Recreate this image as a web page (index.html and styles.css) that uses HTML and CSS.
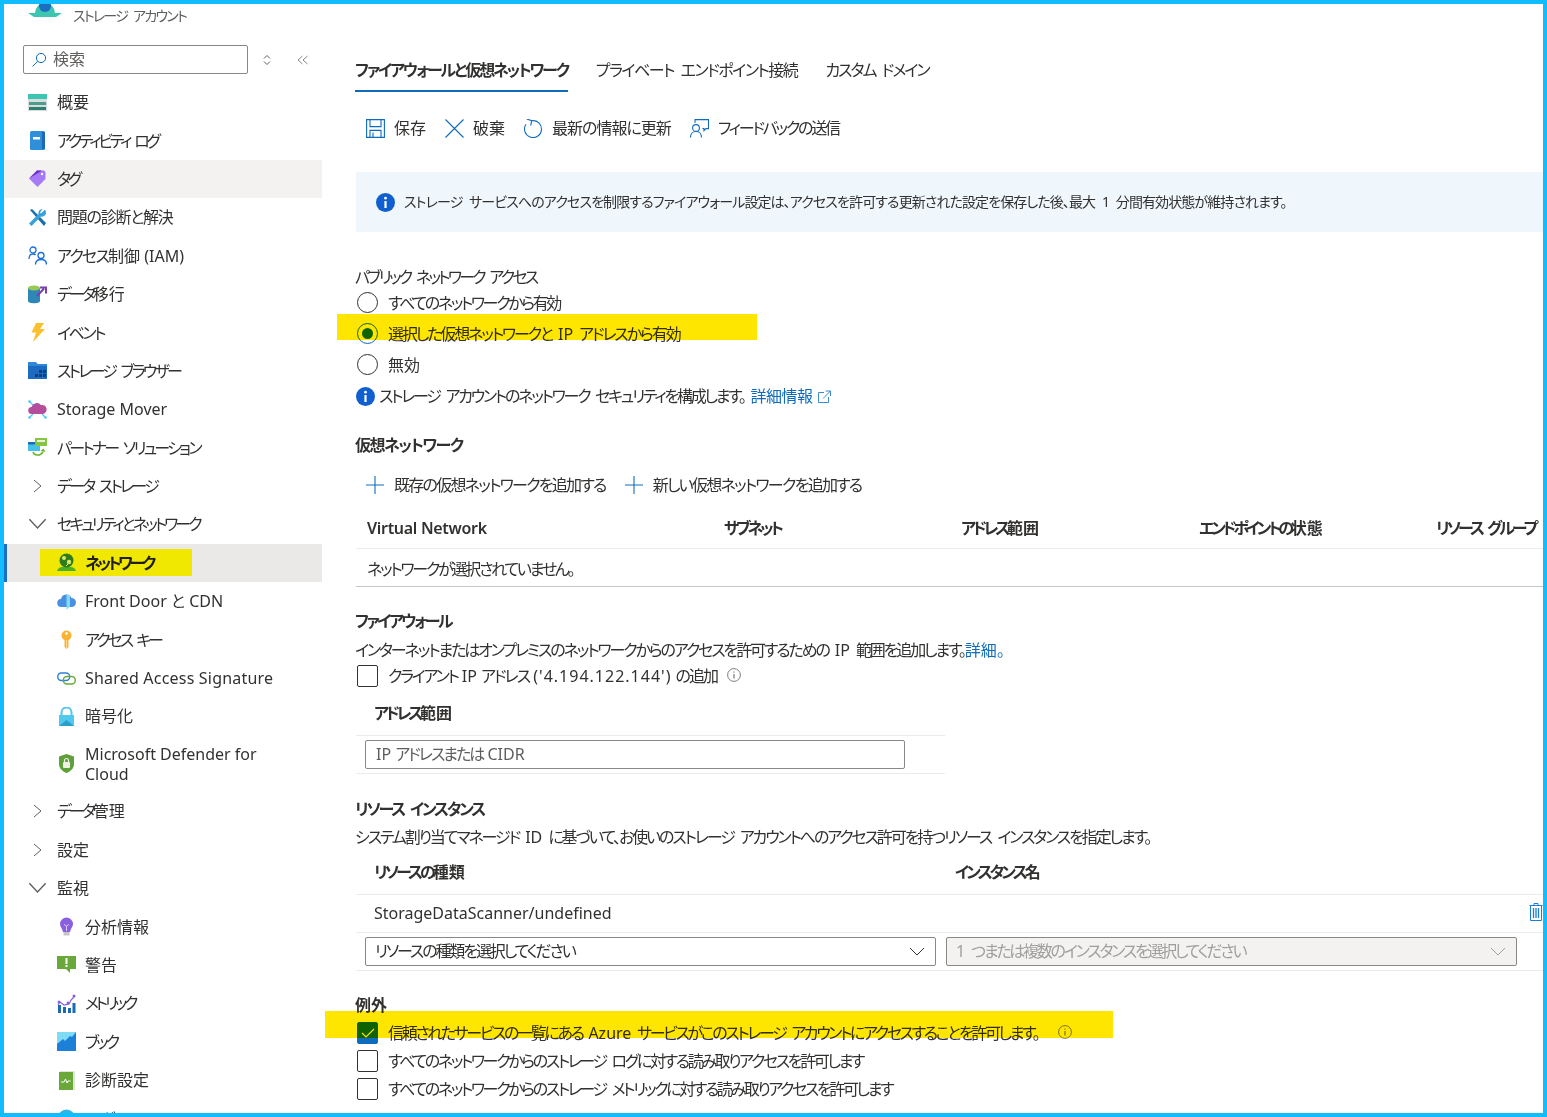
FILE: index.html
```html
<!DOCTYPE html>
<html lang="ja">
<head>
    <meta charset="UTF-8">
    <title>ファイアウォールと仮想ネットワーク</title>
    <link rel="stylesheet" href="styles.css">
</head>
<body>
<div class="frame">
    <!-- left menu -->
    <aside class="sidebar">
        <div class="brand">
            <svg class="brand-icon" viewBox="0 0 34 13"><path d="M0 9h34l-6 4H6z" fill="#3cc5b0"/><path d="M7 9a10 10 0 0 1 20 0z" fill="#3cc5b0"/><circle cx="17" cy="2" r="6" fill="#1b6fc2"/></svg>
            <span class="tight-18 sp">ストレージ アカウント</span>
        </div>
        <div class="search-row">
            <div class="search">
                <svg class="search-icon" viewBox="0 0 16 16"><circle cx="10" cy="6" r="4.6" fill="none" stroke="#0f6cbd"/><path d="M6.6 9.4 1.5 14.5" stroke="#0f6cbd" fill="none"/></svg>
                <span>検索</span>
            </div>
            <svg class="sort-icon" viewBox="0 0 10 12"><path d="M2 4.5 5 1.5l3 3M2 7.5l3 3 3-3" fill="none" stroke="#605e5c"/></svg>
            <svg class="collapse-icon" viewBox="0 0 12 10"><path d="M5.5 1 1 5l4.5 4M10.5 1 6 5l4.5 4" fill="none" stroke="#8a8886"/></svg>
        </div>
        <nav class="nav">
            <a class="nav-item">
                <svg class="ico" viewBox="0 0 19 19"><rect y="1" width="19" height="5" fill="#3cc5b0"/><rect y="6" width="19" height="12" fill="#d9dcdc"/><rect x="1" y="9" width="17" height="3" fill="#4a9c8c"/><rect x="1" y="14" width="17" height="3" fill="#2f7f70"/></svg>
                <span>概要</span>
            </a>
            <a class="nav-item">
                <svg class="ico" viewBox="0 0 19 19"><rect x="2" y="0" width="15" height="19" rx="1.5" fill="#2f8fdb"/><rect x="14" y="1" width="3" height="17" fill="#1c6bb0"/><rect x="5" y="6" width="7" height="2.5" fill="#fff"/></svg>
                <span class="tight-32 sp">アクティビティ ログ</span>
            </a>
            <a class="nav-item hovered">
                <svg class="ico" viewBox="0 0 19 19"><path d="M1 9.5 9 1.500h7l1.500 1.500v7l-8 8z" fill="#a67af4"/><path d="M1 9.500 9 1.500h5z" fill="#6b2fc9"/><circle cx="14" cy="5" r="1.200" fill="#fff"/></svg>
                <span class="tight-32">タグ</span>
            </a>
            <a class="nav-item">
                <svg class="ico" viewBox="0 0 19 19"><path d="M2 2 4 1l14 14-2 3z" fill="#1b6fa8"/><path d="M17 1.500 13 5.500l-1-1 2.500-3.500a4 4 0 0 0-4 5L1 15.500 3.500 18l9.500-9.500a4 4 0 0 0 5-4.500z" fill="#3aa0d8"/></svg>
                <span class="tight-12">問題の診断と解決</span>
            </a>
            <a class="nav-item">
                <svg class="ico" viewBox="0 0 19 19"><g fill="none" stroke="#1b6fd8" stroke-width="1.300"><circle cx="5" cy="4" r="3"/><path d="M1 13c0-3 1.500-5 4-5 1 0 2 .3 2.500 1"/><circle cx="13" cy="9.500" r="3"/><path d="M7.500 18.500c0-3 2.200-5 5.500-5s5.500 2 5.500 5"/></g></svg>
                <span><span class="tight-18">アクセス</span>制御 (IAM)</span>
            </a>
            <a class="nav-item">
                <svg class="ico" viewBox="0 0 19 19"><path d="M0 3v13c0 3 12 3 12 0V3z" fill="#2f87b8"/><ellipse cx="6" cy="3" rx="6" ry="2.500" fill="#9bc850"/><path d="M9 11 16 3.500M12 2.500h6v6" stroke="#7a3fa8" stroke-width="2" fill="none"/></svg>
                <span><span class="tight-30">データ</span>移行</span>
            </a>
            <a class="nav-item">
                <svg class="ico" viewBox="0 0 19 19"><path d="M8 0h8l-4 6h5L5 19l3-9.500H3.500z" fill="#fbc02d"/></svg>
                <span class="tight-25">イベント</span>
            </a>
            <a class="nav-item">
                <svg class="ico" viewBox="0 0 19 19"><path d="M0 1h8l1.500 2H19v15H0z" fill="#2f87d8"/><rect y="5" width="19" height="13" fill="#1c6bc0"/><path d="M11 9h3v3h-3zM15 9h3v3h-3zM7 13h3v3H7zM11 13h3v3h-3zM15 13h3v3h-3z" fill="#0d3f7f"/></svg>
                <span class="tight-28 sp">ストレージ ブラウザー</span>
            </a>
            <a class="nav-item">
                <svg class="ico" viewBox="0 0 19 19"><g stroke="#50c8f0" stroke-width="1.200"><path d="M1 1l4 4M18 18l-4-4M1 18l4-4"/></g><circle cx="1.500" cy="1.500" r="1.300" fill="#50c8f0"/><circle cx="1.500" cy="17.500" r="1.300" fill="#50c8f0"/><circle cx="17.500" cy="17.500" r="1.300" fill="#50c8f0"/><path d="M4 14a3.500 3.500 0 0 1-.5-7A5.500 5.500 0 0 1 13 5a4.500 4.500 0 0 1 2 9z" fill="#b44d9c"/></svg>
                <span class="plain">Storage Mover</span>
            </a>
            <a class="nav-item">
                <svg class="ico" viewBox="0 0 19 19"><rect x="0" y="4" width="12" height="9" fill="#45c0e8"/><rect x="0" y="4" width="12" height="2.500" fill="#1c6bb0"/><rect x="7" y="0" width="12" height="8" fill="#86c544"/><rect x="9" y="2" width="8" height="2" fill="#e5f2d5"/><path d="M5 14c1 3.500 7 4.500 10 0" fill="none" stroke="#6ab42d" stroke-width="1.500"/><path d="m12.500 13 3-2.500 2 3.500z" fill="#6ab42d"/></svg>
                <span class="tight-28 sp">パートナー ソリューション</span>
            </a>
            <a class="nav-item">
                <svg class="chev" viewBox="0 0 10 14"><path d="M1.500 1 8.500 7l-7 6" fill="none" stroke="#605e5c"/></svg>
                <span class="tight-28 sp">データ ストレージ</span>
            </a>
            <a class="nav-item">
                <svg class="chev" viewBox="0 0 14 10"><path d="M1 1.500 7 8l6-6.500" fill="none" stroke="#605e5c"/></svg>
                <span class="tight-30">セキュリティとネットワーク</span>
            </a>
            <a class="nav-item sub active">
                <span class="mark">
                    <svg class="ico" viewBox="0 0 19 19"><path d="M0 18c1-3 3-4 5-4h9c2 0 4 1 5 4z" fill="#4caf27"/><circle cx="9.500" cy="7.500" r="7" fill="#2e7d1a"/><circle cx="7" cy="5" r="2" fill="#d9e86a"/><circle cx="12" cy="9" r="2.200" fill="#d9e86a"/><path d="M9 13l2-2" stroke="#d9e86a"/></svg>
                    <span class="tight-32">ネットワーク</span>
                </span>
            </a>
            <a class="nav-item sub">
                <svg class="ico" viewBox="0 0 19 19"><path d="M4.500 15a4 4 0 0 1-.5-8A5.500 5.500 0 0 1 14.500 6a4.500 4.500 0 0 1 0 9z" fill="#4a90e2"/><path d="M9.500 3h3.500v11l-3.500 4z" fill="#7fdcf5"/></svg>
                <span>Front Door と CDN</span>
            </a>
            <a class="nav-item sub">
                <svg class="ico" viewBox="0 0 19 19"><circle cx="9.500" cy="5.500" r="5" fill="#f9b233"/><circle cx="9.500" cy="3.500" r="1.300" fill="#fff"/><path d="M7.500 9h4v8l-2 2-2-2z" fill="#f9b233"/><path d="M9.500 10v8" stroke="#fcd886"/></svg>
                <span class="tight-30 sp">アクセス キー</span>
            </a>
            <a class="nav-item sub">
                <svg class="ico" viewBox="0 0 19 19"><rect x="0.700" y="4" width="12" height="7.500" rx="3.700" fill="none" stroke="#2f7fd8" stroke-width="1.400"/><rect x="6.300" y="7.500" width="12" height="7.500" rx="3.700" fill="none" stroke="#6aa83a" stroke-width="1.400"/></svg>
                <span class="plain wide-02">Shared Access Signature</span>
            </a>
            <a class="nav-item sub">
                <svg class="ico" viewBox="0 0 19 19"><path d="M4.500 9V5.500a5 5 0 0 1 10 0V9" fill="none" stroke="#50c8f0" stroke-width="2"/><rect x="2" y="8" width="15" height="11" fill="#50c8f0"/><path d="M2 19l7.500-6 7.500 6z" fill="#2a9fc9"/></svg>
                <span>暗号化</span>
            </a>
            <a class="nav-item sub tall">
                <svg class="ico" viewBox="0 0 19 19"><path d="M9.500 0 17 2.500V10c0 5-4 7.500-7.500 9C6 17.500 2 15 2 10V2.500z" fill="#5fa03a"/><rect x="6" y="8" width="7" height="6" rx="1" fill="#f0f0e4"/><path d="M7.500 8V6.500a2 2 0 0 1 4 0V8" fill="none" stroke="#f0f0e4" stroke-width="1.200"/></svg>
                <span class="plain">Microsoft Defender for Cloud</span>
            </a>
            <a class="nav-item">
                <svg class="chev" viewBox="0 0 10 14"><path d="M1.500 1 8.500 7l-7 6" fill="none" stroke="#605e5c"/></svg>
                <span><span class="tight-30">データ</span>管理</span>
            </a>
            <a class="nav-item">
                <svg class="chev" viewBox="0 0 10 14"><path d="M1.500 1 8.500 7l-7 6" fill="none" stroke="#605e5c"/></svg>
                <span>設定</span>
            </a>
            <a class="nav-item">
                <svg class="chev" viewBox="0 0 14 10"><path d="M1 1.500 7 8l6-6.500" fill="none" stroke="#605e5c"/></svg>
                <span>監視</span>
            </a>
            <a class="nav-item sub">
                <svg class="ico" viewBox="0 0 19 19"><path d="M3 7a6.500 6.500 0 0 1 13 0c0 3-2.500 4.500-3 8H6c-.5-3.500-3-5-3-8z" fill="#8a5fe0"/><path d="M7 7.500 9.500 9 12 7.500M9.500 9v5" stroke="#d9c8f8" fill="none"/><rect x="6.500" y="15" width="6" height="3.500" fill="#c8c6c4"/></svg>
                <span>分析情報</span>
            </a>
            <a class="nav-item sub">
                <svg class="ico" viewBox="0 0 19 19"><path d="M0 1h19v13h-6v4l-4-4H0z" fill="#6aa83a"/><rect x="8.500" y="3" width="2" height="6" fill="#fff"/><rect x="8.500" y="10" width="2" height="2" fill="#fff"/></svg>
                <span>警告</span>
            </a>
            <a class="nav-item sub">
                <svg class="ico" viewBox="0 0 19 19"><path d="M1 19v-8h3v8zM6 19v-6h3v6zM11 19v-5h3v5zM15.500 19V9h3v10z" fill="#1c6bb0"/><path d="M1 11l2-3 4 3 5-1 2-4 3-3" stroke="#8a5fe0" stroke-width="1.200" fill="none"/><circle cx="2" cy="8" r="1.500" fill="#8a5fe0"/><circle cx="11" cy="9" r="1.500" fill="#8a5fe0"/><circle cx="17" cy="2" r="1.500" fill="#8a5fe0"/></svg>
                <span class="tight-32">メトリック</span>
            </a>
            <a class="nav-item sub">
                <svg class="ico" viewBox="0 0 19 19"><rect width="19" height="19" fill="#7fdcf5"/><path d="M0 12 6 7l2 2 5-5 2 1 4-5v19H0z" fill="#1c7fd8"/></svg>
                <span class="tight-30">ブック</span>
            </a>
            <a class="nav-item sub">
                <svg class="ico" viewBox="0 0 19 19"><rect x="3" y="0" width="15" height="19" fill="#dfe6d5"/><rect x="2" y="1" width="14" height="18" fill="#6aa83a"/><path d="M4 11h3l1.500-3 1.500 4 1-2h2.500" stroke="#fff" fill="none"/></svg>
                <span>診断設定</span>
            </a>
            <a class="nav-item sub">
                <svg class="ico" viewBox="0 0 19 19"><circle cx="9.500" cy="9.500" r="9" fill="#2fb5e8"/></svg>
                <span>ログ</span>
            </a>
        </nav>
    </aside>

    <!-- network settings -->
    <main class="content">
        <div class="tabs">
            <a class="tab selected tight-21">ファイアウォールと仮想ネットワーク</a>
            <a class="tab tight-15 sp">プライベート エンドポイント接続</a>
            <a class="tab tight-20 sp">カスタム ドメイン</a>
        </div>

        <div class="toolbar">
            <a class="tool">
                <svg class="tool-icon" viewBox="0 0 19 19"><g fill="none" stroke="#0f6cbd" stroke-width="1.100"><path d="M.6.600h17.800v17.800H.6z"/><path d="M4 .6v7h11v-7M4 18.400v-7h11v7M7 13.500v5"/></g></svg>
                <span>保存</span>
            </a>
            <a class="tool">
                <svg class="tool-icon" viewBox="0 0 19 19"><path d="M.5.500l18 18M18.500.500l-18 18" stroke="#0f6cbd" stroke-width="1.100" fill="none"/></svg>
                <span>破棄</span>
            </a>
            <a class="tool">
                <svg class="tool-icon" viewBox="0 0 19 19"><path d="M7.700 1.700a8.500 8.500 0 1 1-5.700 3.600" fill="none" stroke="#0f6cbd" stroke-width="1.100"/><path d="M2.700 0 7.700 1.700 6.700 6.700" fill="none" stroke="#0f6cbd" stroke-width="1.100"/></svg>
                <span class="tight-10">最新の情報に更新</span>
            </a>
            <a class="tool">
                <svg class="tool-icon" viewBox="0 0 19 19"><g fill="none" stroke="#0f6cbd" stroke-width="1.100"><path d="M5 4V.6h13.500v9H16l-2 2v-2h-1.500"/><circle cx="6" cy="9" r="3.400"/><path d="M.5 18.500c0-3.500 2.300-6 5.500-6s5.500 2.500 5.500 6"/></g></svg>
                <span class="tight-22">フィードバックの送信</span>
            </a>
        </div>

        <div class="info-bar">
            <svg class="info-icon" viewBox="0 0 19 19"><circle cx="9.500" cy="9.500" r="9.500" fill="#0f5fd0"/><rect x="8.400" y="8" width="2.200" height="7" fill="#fff"/><circle cx="9.500" cy="5.200" r="1.400" fill="#fff"/></svg>
            <span class="tight-09 sp">ストレージ サービスへのアクセスを制限するファイアウォール設定は、アクセスを許可する更新された設定を保存した後、最大 1 分間有効状態が維持されます。</span>
        </div>

        <div class="field-label tight-28 sp">パブリック ネットワーク アクセス</div>
        <div class="option"><span class="radio"></span><span class="tight-24">すべてのネットワークから有効</span></div>
        <div class="option"><span class="radio checked"></span><span class="tight-21 sp">選択した仮想ネットワークと <span class="latin">IP</span> アドレスから有効</span></div>
        <div class="option"><span class="radio"></span><span>無効</span></div>
        <div class="info-line">
            <svg class="info-icon" viewBox="0 0 19 19"><circle cx="9.500" cy="9.500" r="9.500" fill="#0f5fd0"/><rect x="8.400" y="8" width="2.200" height="7" fill="#fff"/><circle cx="9.500" cy="5.200" r="1.400" fill="#fff"/></svg>
            <span class="tight-22 sp">ストレージ アカウントのネットワーク セキュリティを構成します。</span>
            <a class="link">詳細情報</a>
            <svg class="ext-icon" viewBox="0 0 13 13"><path d="M10.500 7v5.500H.5v-10H6M7.500 1h5v5M12.500 1 5 8.500" fill="none" stroke="#0f6cbd" stroke-width=".8"/></svg>
        </div>

        <h2 class="heading h-vnet tight-15">仮想ネットワーク</h2>
        <div class="add-row">
            <a class="tool">
                <svg class="plus-icon" viewBox="0 0 18 18"><path d="M9 0v18M0 9h18" stroke="#0f6cbd" stroke-width="1.100"/></svg>
                <span class="tight-18">既存の仮想ネットワークを追加する</span>
            </a>
            <a class="tool">
                <svg class="plus-icon" viewBox="0 0 18 18"><path d="M9 0v18M0 9h18" stroke="#0f6cbd" stroke-width="1.100"/></svg>
                <span class="tight-18">新しい仮想ネットワークを追加する</span>
            </a>
        </div>
        <div class="vnet-head">
            <span class="tight-03 plain-head">Virtual Network</span>
            <span class="tight-32">サブネット</span>
            <span><span class="tight-32">アドレス</span>範囲</span>
            <span><span class="tight-32">エンドポイントの</span>状態</span>
            <span class="tight-30 sp">リソース グループ</span>
        </div>
        <div class="vnet-empty tight-22">ネットワークが選択されていません。</div>

        <h2 class="heading h-fw tight-25">ファイアウォール</h2>
        <p class="desc tight-21 sp">インターネットまたはオンプレミスのネットワークからのアクセスを許可するための <span class="latin">IP</span> 範囲を追加します。<a class="link latin">詳細。</a></p>
        <div class="client-row">
            <span class="check"></span>
            <span class="client-text"><span class="tight-22">クライアント</span> IP <span class="tight-20">アドレス</span> <span class="wide-10">('4.194.122.144')</span> <span class="tight-20">の追加</span></span>
            <svg class="hint-icon" viewBox="0 0 14 14"><circle cx="7" cy="7" r="6.400" fill="none" stroke="#605e5c" stroke-width=".8"/><path d="M7 6v4.500M7 3.500v1.200" stroke="#605e5c"/></svg>
        </div>
        <div class="addr-table">
            <div class="grid-head"><span class="tight-32">アドレス</span>範囲</div>
            <div class="grid-cell"><div class="text-box">IP <span class="tight-20">アドレスまたは</span> CIDR</div></div>
        </div>

        <h2 class="heading h-res tight-22 sp">リソース インスタンス</h2>
        <p class="desc tight-21 sp">システム割り当てマネージド <span class="latin">ID</span> に基づいて、お使いのストレージ アカウントへのアクセス許可を持つリソース インスタンスを指定します。</p>
        <div class="res-table">
            <div class="grid-head res-cols">
                <span><span class="tight-30">リソースの</span>種類</span>
                <span><span class="tight-30">インスタンス</span>名</span>
            </div>
            <div class="res-row">
                <span>StorageDataScanner/undefined</span>
                <svg class="trash-icon" viewBox="0 0 14 18"><g fill="none" stroke="#1b7fd8"><path d="M.5 2.500h13M5 2.500V.5h4v2M1.500 2.500v15h11v-15"/><path d="M4.500 5v10M7 5v10M9.500 5v10" stroke-width="1.300"/></g></svg>
            </div>
            <div class="grid-cell select-row">
                <div class="select">
                    <span class="tight-21">リソースの種類を選択してください</span>
                    <svg class="select-arrow" viewBox="0 0 16 9"><path d="M1 1l7 7 7-7" fill="none" stroke="#323130"/></svg>
                </div>
                <div class="select disabled">
                    <span class="tight-22 sp"><span class="latin">1</span> つまたは複数のインスタンスを選択してください</span>
                    <svg class="select-arrow" viewBox="0 0 16 9"><path d="M1 1l7 7 7-7" fill="none" stroke="#a19f9d"/></svg>
                </div>
            </div>
        </div>

        <h2 class="heading h-exc">例外</h2>
        <div class="check-row">
            <span class="check on"><svg viewBox="0 0 14 10"><path d="M1 5l4 4 8-8" fill="none" stroke="#fff" stroke-width="1.100"/></svg></span>
            <span class="tight-24 sp">信頼されたサービスの一覧にある <span class="latin">Azure</span> サービスがこのストレージ アカウントにアクセスすることを許可します。</span>
            <svg class="hint-icon" viewBox="0 0 14 14"><circle cx="7" cy="7" r="6.400" fill="none" stroke="#605e5c" stroke-width=".8"/><path d="M7 6v4.500M7 3.500v1.200" stroke="#605e5c"/></svg>
        </div>
        <div class="check-row"><span class="check"></span><span class="tight-24 sp">すべてのネットワークからのストレージ ログに対する読み取りアクセスを許可します</span></div>
        <div class="check-row"><span class="check"></span><span class="tight-24 sp">すべてのネットワークからのストレージ メトリックに対する読み取りアクセスを許可します</span></div>
    </main>

    <!-- marker strokes drawn over the capture -->
    <div class="marker marker-radio"></div>
    <div class="marker marker-except"></div>
</div>
</body>
</html>
```

FILE: styles.css
```css
* {
    box-sizing: border-box;
}

body {
    margin: 0;
    font-family: "Noto Sans", "Noto Sans CJK JP", sans-serif;
    font-size: 16px;
    font-feature-settings: "palt";
    color: #323130;
    background: white;
}

/* Kana run narrower in the capture's font */
.tight-03 { letter-spacing: -0.3px; }
.tight-09 { letter-spacing: -0.9px; }
.tight-10 { letter-spacing: -1px; }
.tight-12 { letter-spacing: -1.25px; }
.tight-15 { letter-spacing: -1.5px; }
.tight-18 { letter-spacing: -1.75px; }
.tight-20 { letter-spacing: -2px; }
.tight-21 { letter-spacing: -2.12px; }
.tight-22 { letter-spacing: -2.25px; }
.tight-24 { letter-spacing: -2.37px; }
.tight-25 { letter-spacing: -2.5px; }
.tight-28 { letter-spacing: -2.75px; }
.tight-30 { letter-spacing: -3px; }
.tight-32 { letter-spacing: -3.25px; }
.wide-02 { letter-spacing: 0.2px; }
.wide-10 { letter-spacing: 1px; }
.latin { letter-spacing: 0; }
.sp { word-spacing: 4px; }

.frame {
    position: relative;
    display: flex;
    width: 1547px;
    height: 1117px;
    border: 4px solid #12bdff;
    overflow: hidden;
}

/* Sidebar */
.sidebar {
    flex: 0 0 318px;
    height: 100%;
    overflow: hidden;
}

.brand {
    display: flex;
    height: 23px;
    padding-left: 24px;
    font-size: 14px;
    color: #605e5c;
}

.brand-icon {
    width: 34px;
    height: 13px;
    margin-right: 11px;
}

.brand span {
    line-height: 23px;
}

.search-row {
    display: flex;
    align-items: center;
    height: 29px;
    margin-top: 18px;
    padding-left: 19px;
}

.search {
    display: flex;
    align-items: center;
    gap: 6px;
    width: 225px;
    height: 29px;
    padding: 0 0 3px 7px;
    border: 1px solid #8a8886;
    border-radius: 2px;
    color: #605e5c;
}

.search-icon {
    width: 16px;
    height: 16px;
    margin-top: 3px;
}

.sort-icon {
    width: 10px;
    height: 12px;
    margin-left: 14px;
}

.collapse-icon {
    width: 12px;
    height: 10px;
    margin-left: 25px;
}

.nav {
    margin-top: 9px;
}

.nav-item {
    display: flex;
    align-items: center;
    gap: 10px;
    height: 38.4px;
    padding-left: 24px;
}

.nav-item > span {
    padding-bottom: 2px;
}

.nav-item > .plain {
    padding-bottom: 0;
}

.nav-item.sub {
    gap: 9px;
    padding-left: 53px;
}

.nav-item.tall {
    height: 56.6px;
    line-height: 20px;
    padding-right: 48px;
}

.hovered {
    background: #f3f2f1;
}

.nav-item.active {
    padding-left: 33px;
    border-left: 3px solid #1b6fc2;
    background: #ebe9e8;
}

.nav-item > .mark {
    display: flex;
    align-items: center;
    gap: 9px;
    flex: none;
    width: 152px;
    height: 27px;
    padding: 0 0 0 17px;
    background: #f0e800;
    font-weight: 600;
    color: #201f1e;
}

.mark span {
    padding-bottom: 2px;
}

.ico {
    flex: none;
    width: 19px;
    height: 19px;
}

.chev {
    flex: none;
    width: 19px;
    height: 14px;
}

/* Main column */
.content {
    flex: 1;
    min-width: 0;
    padding: 46px 0 0 33px;
}

.tabs {
    display: flex;
    gap: 28px;
}

.tab {
    display: flex;
    align-items: center;
    height: 42px;
    padding-bottom: 2px;
    border-bottom: 2px solid transparent;
}

.tab.selected {
    font-weight: 600;
    border-bottom-color: #0f6cbd;
}

.toolbar {
    display: flex;
    gap: 19px;
    height: 32px;
    margin-top: 20px;
    padding-left: 11px;
}

.tool {
    display: flex;
    align-items: center;
    gap: 9px;
}

.tool span {
    padding-bottom: 2px;
}

.tool-icon {
    width: 19px;
    height: 19px;
}

.info-bar {
    display: flex;
    align-items: center;
    gap: 9px;
    height: 60px;
    margin: 28px 0 0 1px;
    padding-left: 20px;
    background: #eff6fc;
    font-size: 14px;
}

.info-bar span {
    padding-bottom: 2px;
}

.info-icon {
    flex: none;
    width: 19px;
    height: 19px;
}

.field-label {
    height: 21px;
    margin-top: 34px;
    line-height: 23px;
}

.option {
    display: flex;
    align-items: center;
    gap: 10px;
    height: 31px;
    padding-left: 2px;
}

.option > span:last-child {
    padding-bottom: 2px;
}

.radio {
    flex: none;
    display: flex;
    align-items: center;
    justify-content: center;
    width: 21px;
    height: 21px;
    border: 1px solid #323130;
    border-radius: 50%;
}

.radio.checked {
    border-color: #0f6cbd;
}

.radio.checked::after {
    content: "";
    width: 11px;
    height: 11px;
    border-radius: 50%;
    background: #0f6cbd;
}

.info-line {
    display: flex;
    align-items: center;
    height: 32px;
    padding-left: 1px;
}

.info-line > span {
    margin-left: 4px;
    margin-right: 6px;
    padding-bottom: 2px;
}

.link {
    color: #0f6cbd;
}

.info-line .link {
    padding-bottom: 2px;
    letter-spacing: -0.5px;
}

.ext-icon {
    width: 13px;
    height: 13px;
    margin-left: 5px;
}

.heading {
    height: 24px;
    margin: 0;
    font-size: 16px;
    font-weight: 600;
    line-height: 24px;
}

.h-vnet {
    margin-top: 21px;
}

.add-row {
    display: flex;
    gap: 19px;
    height: 32px;
    margin-top: 12px;
    padding-left: 11px;
}

.add-row .tool {
    gap: 10px;
}

.plus-icon {
    width: 18px;
    height: 18px;
}

.vnet-head {
    display: grid;
    grid-template-columns: 357px 237px 238px 237px 1fr;
    align-items: center;
    height: 41px;
    margin: 7px 0 0 1px;
    padding: 0 0 2px 11px;
    border-bottom: 1px solid #edebe9;
    font-weight: 600;
    white-space: nowrap;
}

.plain-head {
    padding-top: 2px;
}

.vnet-empty {
    height: 38px;
    margin-left: 1px;
    padding-left: 11px;
    border-bottom: 1px solid #c8c6c4;
    line-height: 40px;
}

.h-fw {
    margin-top: 22px;
}

.desc {
    height: 24px;
    margin: 5px 0 0;
    line-height: 24px;
}

.h-res + .desc {
    margin-top: 4px;
}

.client-row {
    display: flex;
    align-items: center;
    height: 24px;
    margin-top: 2px;
    padding-left: 2px;
}

.client-text {
    margin-left: 10px;
    padding-bottom: 3px;
}

.client-row .hint-icon {
    margin: 0 0 2px 10px;
}

.check {
    flex: none;
    display: flex;
    align-items: center;
    justify-content: center;
    width: 21px;
    height: 22px;
    border: 1px solid #323130;
    border-radius: 2px;
}

.check.on {
    border-color: #0f6cbd;
    background: #0f6cbd;
}

.check.on svg {
    width: 14px;
    height: 10px;
}

.hint-icon {
    width: 14px;
    height: 14px;
    margin-left: 10px;
}

.addr-table {
    width: 589px;
    margin: 4px 0 0 1px;
}

.grid-head {
    height: 44px;
    padding-left: 18px;
    border-bottom: 1px solid #edebe9;
    font-weight: 600;
    line-height: 42px;
}

.grid-cell {
    height: 38px;
    padding: 4px 0 0 9px;
    border-bottom: 1px solid #edebe9;
}

.text-box {
    width: 540px;
    height: 29px;
    padding-left: 10px;
    border: 1px solid #8a8886;
    border-radius: 2px;
    line-height: 27px;
    color: #605e5c;
}

.h-res {
    margin-top: 23px;
}

.res-table {
    margin: 2px 0 0 1px;
}

.res-cols {
    display: grid;
    grid-template-columns: 581px 1fr;
}

.res-row {
    display: flex;
    align-items: center;
    justify-content: space-between;
    height: 38px;
    padding-left: 18px;
    border-bottom: 1px solid #edebe9;
}

.res-row span {
    padding-bottom: 1px;
}

.trash-icon {
    width: 14px;
    height: 18px;
    margin-bottom: 3px;
}

.select-row {
    display: flex;
    gap: 10px;
}

.select {
    display: flex;
    align-items: center;
    justify-content: space-between;
    width: 571px;
    height: 29px;
    padding: 0 10px 0 9px;
    border: 1px solid #8a8886;
    border-radius: 2px;
}

.select > span {
    padding-bottom: 3px;
}

.select.disabled {
    background: #f3f2f1;
    color: #a19f9d;
}

.select-arrow {
    width: 16px;
    height: 9px;
}

.h-exc {
    margin-top: 22px;
}

.check-row {
    display: flex;
    align-items: center;
    gap: 10px;
    height: 28px;
    padding-left: 2px;
}

.check-row > span:nth-child(2) {
    padding-bottom: 3px;
}

.check-row .hint-icon {
    margin-bottom: 2px;
}

.h-exc + .check-row {
    margin-top: 2px;
}

/* Highlighter strokes */
.marker {
    position: absolute;
    background: #ffe600;
    mix-blend-mode: multiply;
}

.marker-radio {
    left: 333px;
    top: 310px;
    width: 420px;
    height: 26px;
}

.marker-except {
    left: 321px;
    top: 1007px;
    width: 788px;
    height: 27px;
}
```
